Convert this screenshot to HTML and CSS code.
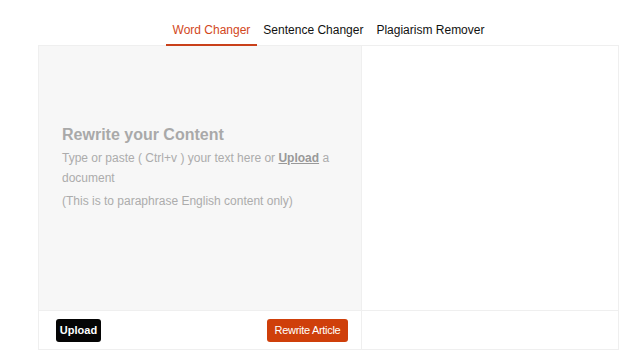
FILE: index.html
```html
<!DOCTYPE html>
<html>
<head>
<meta charset="utf-8">
<link rel="stylesheet" href="styles.css">
</head>
<body>
<div class="page">
  <nav class="tabs">
    <a class="tab active">Word Changer</a>
    <a class="tab">Sentence Changer</a>
    <a class="tab">Plagiarism Remover</a>
  </nav>
  <div class="box">
    <div class="col left">
      <div class="panel input">
        <div class="placeholder">
          <h2>Rewrite your Content</h2>
          <p>Type or paste ( Ctrl+v ) your text here or <b class="link">Upload</b> a document</p>
          <p class="note">(This is to paraphrase English content only)</p>
        </div>
      </div>
      <div class="foot">
        <button class="btn dark">Upload</button>
        <button class="btn primary">Rewrite Article</button>
      </div>
    </div>
    <div class="col right">
      <div class="panel output"></div>
      <div class="foot"></div>
    </div>
  </div>
</div>
</body>
</html>
```
FILE: styles.css
```css
* { box-sizing: border-box; }
html, body { margin: 0; padding: 0; background: #fff; }
body { font-family: "Liberation Sans", Arial, sans-serif; }
.page { padding: 17px 0 0 38px; width: 624px; }
.tabs { display: flex; justify-content: center; width: 581px; height: 28px; position: relative; z-index: 1; }
.tab { display: block; padding: 6px 6.5px 0; font-size: 12px; line-height: 15px; color: #111; border-bottom: 2px solid transparent; height: 29px; cursor: pointer; }
.tab.active { color: #d2471c; border-bottom-color: #c9401a; }
.box { display: grid; grid-template-columns: 323px 256px; border: 1px solid #efefef; width: 581px; height: 305px; }
.col { display: flex; flex-direction: column; }
.col.left { border-right: 1px solid #efefef; }
.panel { height: 265px; border-bottom: 1px solid #efefef; }
.panel.input { background: #f7f7f7; padding: 79px 20px 0 23px; }
.panel.output { background: #fff; }
.placeholder { color: #aaa; }
.placeholder h2 { margin: 0 0 3px; font-size: 16px; font-weight: bold; color: #a9a9a9; line-height: 20px; }
.placeholder p { margin: 0; font-size: 12px; line-height: 20px; color: #acacac; }
.placeholder p.note { margin-top: 3px; }
.link { color: #999; text-decoration: underline; }
.foot { flex: 1; display: flex; align-items: center; justify-content: space-between; padding: 0 13px 0 17px; background: #fff; }
.btn { border: none; border-radius: 3px; font-family: "Liberation Sans", Arial, sans-serif; font-size: 11px; color: #fff; height: 23px; cursor: pointer; }
.btn.dark { background: #050505; font-weight: bold; width: 45px; padding: 0; }
.btn.primary { background: #cf3f0a; width: 81px; padding: 0; letter-spacing: -0.3px; }
```
